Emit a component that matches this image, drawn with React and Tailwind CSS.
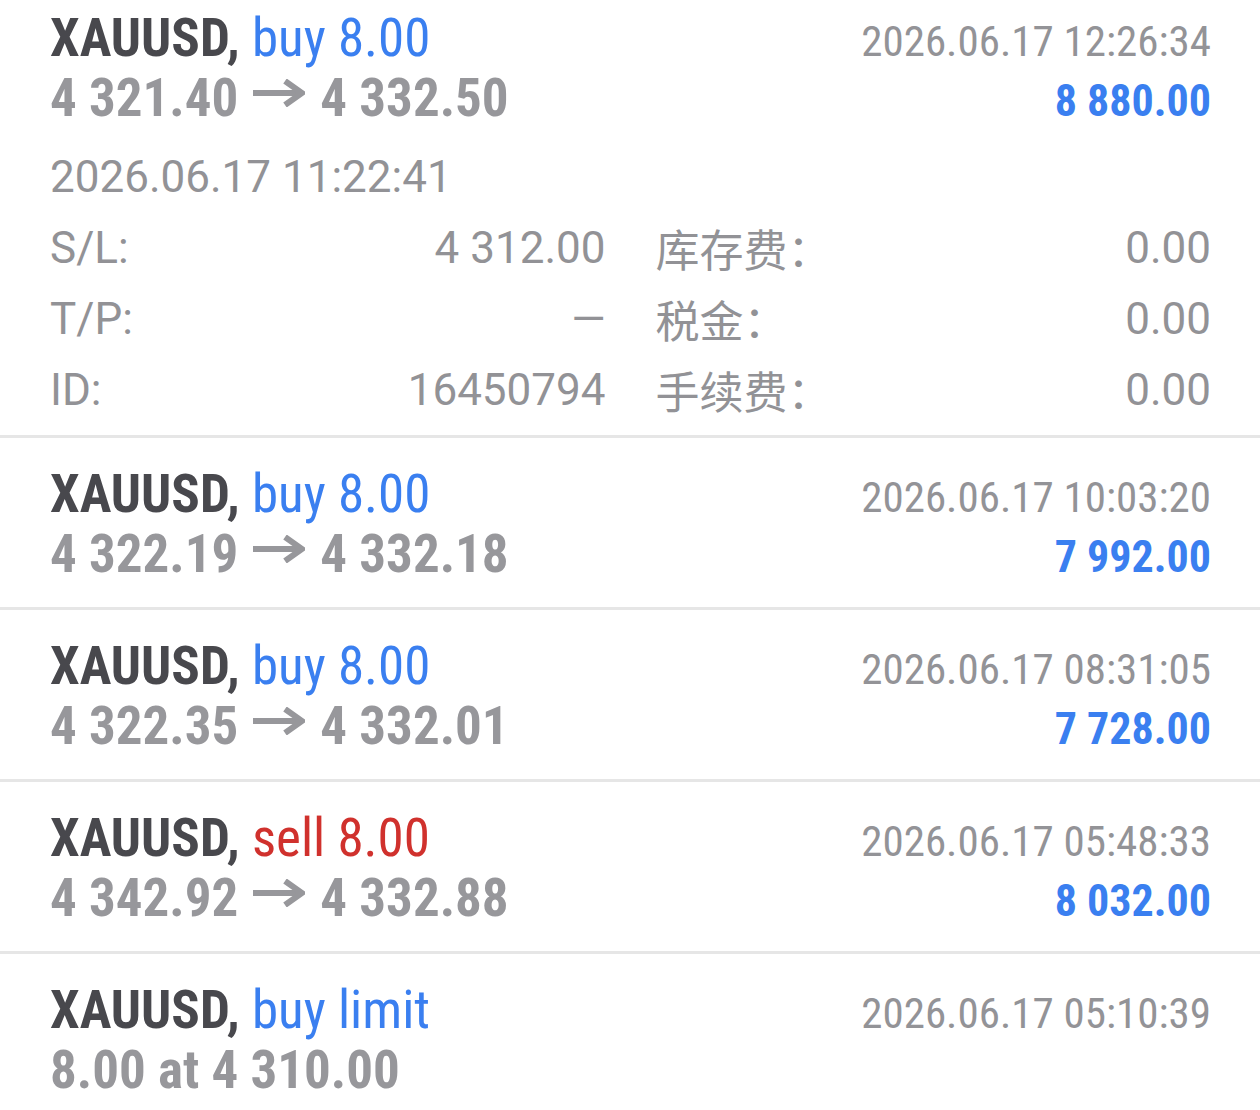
import React from "react";

const rows = [
  { side: "buy 8.00", sideColor: "text-[#3a7ff0]", from: "4 322.19", to: "4 332.18", date: "2026.06.17 10:03:20", profit: "7 992.00" },
  { side: "buy 8.00", sideColor: "text-[#3a7ff0]", from: "4 322.35", to: "4 332.01", date: "2026.06.17 08:31:05", profit: "7 728.00" },
  { side: "sell 8.00", sideColor: "text-[#d0312d]", from: "4 342.92", to: "4 332.88", date: "2026.06.17 05:48:33", profit: "8 032.00" },
  { side: "buy limit", sideColor: "text-[#3a7ff0]", text: "8.00 at 4 310.00", date: "2026.06.17 05:10:39", profit: "" },
];

function Arrow() {
  return (
    <svg width="52" height="28" viewBox="0 0 52 28" className="inline-block mx-[15px] align-[9px]">
      <path d="M0 14 H47" stroke="#97979b" strokeWidth="6" fill="none" />
      <path d="M32 2 L49 14 L32 26" stroke="#97979b" strokeWidth="6" fill="none" />
    </svg>
  );
}

function Head({ side, sideColor, from, to, text, date, profit }) {
  return (
    <>
      <div className="flex justify-between items-baseline h-[60px] leading-[60px]">
        <span className="text-[53px] font-['Roboto_Condensed','Roboto',sans-serif]">
          <span className="font-bold text-[#48484d]">XAUUSD,</span>{" "}
          <span className={sideColor}>{side}</span>
        </span>
        <span className="text-[43px] text-[#939397] font-['Roboto_Condensed','Roboto',sans-serif]">{date}</span>
      </div>
      <div className="flex justify-between items-baseline h-[60px] leading-[60px]">
        <span className="text-[53px] font-bold text-[#97979b] font-['Roboto_Condensed','Roboto',sans-serif]">
          {text ? text : (
            <>
              {from}
              <Arrow />
              {to}
            </>
          )}
        </span>
        <span className="text-[44px] font-bold text-[#3a7ff0] font-['Roboto_Condensed','Roboto',sans-serif]">{profit}</span>
      </div>
    </>
  );
}

function Detail({ label, value, cjk }) {
  return (
    <div className="flex justify-between items-center h-[71px]">
      <span className={cjk ? "font-['Noto_Sans_CJK_SC',sans-serif] text-[44px]" : ""}>{label}</span>
      <span>{value}</span>
    </div>
  );
}

export default function App() {
  return (
    <div className="w-[1260px] h-[1110px] overflow-hidden bg-white font-['Roboto',sans-serif]">
      <div className="pl-[50px] pr-[49px] pt-[8px] pb-[10px] border-b-[3px] border-[#e6e6e6]">
        <Head side="buy 8.00" sideColor="text-[#3a7ff0]" from="4 321.40" to="4 332.50" date="2026.06.17 12:26:34" profit="8 880.00" />
        <div className="mt-[19px] h-[60px] leading-[60px] text-[44px] text-[#929296]">2026.06.17 11:22:41</div>
        <div className="mt-[5px] grid grid-cols-2 gap-x-[50px] text-[44px] text-[#929296] leading-none">
          <Detail label="S/L:" value="4 312.00" />
          <Detail label="库存费：" value="0.00" cjk />
          <Detail label="T/P:" value="—" />
          <Detail label="税金：" value="0.00" cjk />
          <Detail label="ID:" value="16450794" />
          <Detail label="手续费：" value="0.00" cjk />
        </div>
      </div>
      {rows.map((r, i) => (
        <div key={i} className="pl-[50px] pr-[49px] pt-[26px] pb-[23px] border-b-[3px] border-[#e6e6e6]">
          <Head {...r} />
        </div>
      ))}
    </div>
  );
}
